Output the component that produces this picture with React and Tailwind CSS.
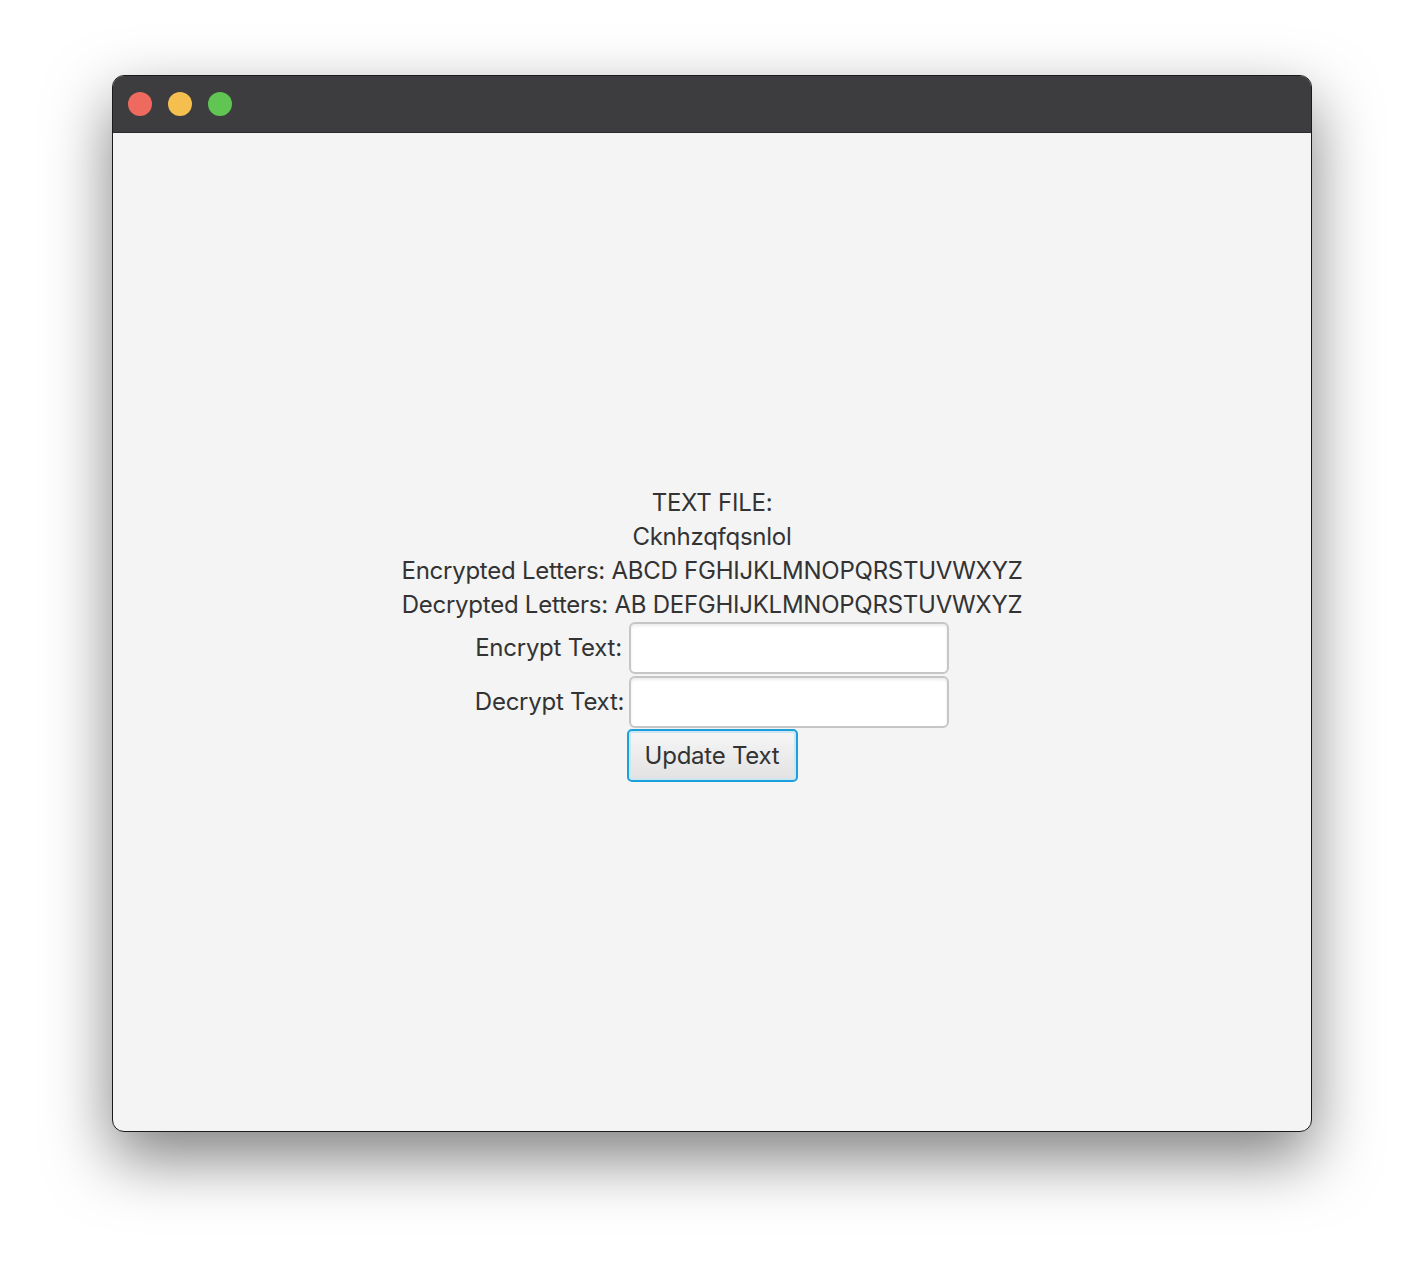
export default function App() {
  return (
    <div className="min-h-screen w-full bg-white flex justify-center pt-[75px]" style={{ fontFamily: "Inter, 'Noto Sans', sans-serif" }}>
      {/* Window */}
      <div className="w-[1200px] h-[1057px] rounded-[12px] border border-[#1a1a1a] overflow-hidden flex flex-col bg-[#f4f4f4] shadow-[0_26px_64px_rgba(0,0,0,0.5)]">
        {/* Title bar */}
        <div className="h-[57px] shrink-0 bg-[#3d3d3f] flex items-center gap-4 pl-[15px] border-b border-[#2a2a2a]">
          <span className="w-6 h-6 rounded-full bg-[#ee6a5f]" />
          <span className="w-6 h-6 rounded-full bg-[#f5bf4f]" />
          <span className="w-6 h-6 rounded-full bg-[#61c554]" />
        </div>

        {/* Content */}
        <div className="flex-1 flex flex-col items-center justify-center text-[#333] text-[24px] tracking-[-0.25px] pt-[4px]">
          <div className="leading-[34px]">TEXT FILE:</div>
          <div className="leading-[34px]">Cknhzqfqsnlol</div>
          <div className="leading-[34px]">Encrypted Letters: ABCD FGHIJKLMNOPQRSTUVWXYZ</div>
          <div className="leading-[34px]">Decrypted Letters: AB DEFGHIJKLMNOPQRSTUVWXYZ</div>

          <div className="flex items-center gap-[7px]">
            <span>Encrypt Text:</span>
            <div className="w-[320px] h-[52px] rounded-[6px] border-2 border-[#c6c6c6] bg-white shadow-[inset_0_2px_3px_rgba(0,0,0,0.08)]" />
          </div>
          <div className="flex items-center gap-[5px] mt-[2px]">
            <span>Decrypt Text:</span>
            <div className="w-[320px] h-[52px] rounded-[6px] border-2 border-[#c6c6c6] bg-white shadow-[inset_0_2px_3px_rgba(0,0,0,0.08)]" />
          </div>
          <button className="mt-[1px] w-[171px] h-[53px] rounded-[5px] border-2 border-[#1aa1dc] bg-gradient-to-b from-[#f6f6f6] to-[#e2e2e2] shadow-[inset_0_0_0_2px_#cde6f2] text-[#333] text-[24px] tracking-[-0.25px]">
            Update Text
          </button>
        </div>
      </div>
    </div>
  );
}
